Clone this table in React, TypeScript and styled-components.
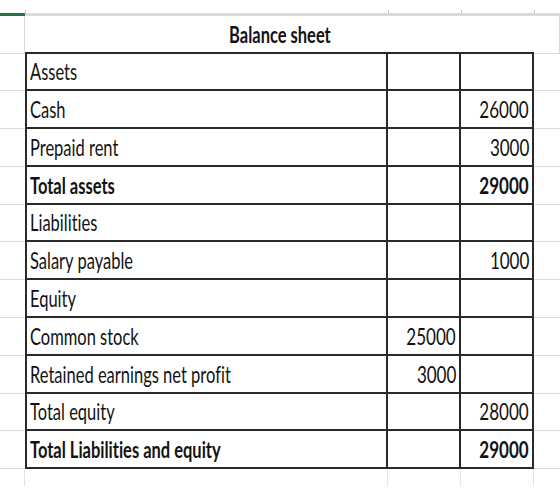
import React from 'react';
import styled, { createGlobalStyle } from 'styled-components';

const GlobalStyle = createGlobalStyle`
  html, body {
    margin: 0;
    padding: 0;
    background: #fff;
  }
  body {
    font-family: Lato, "Open Sans", sans-serif;
    color: #121212;
  }
`;

const COLS = '25px 363px 73px 73px 1fr';
const DARK = '#2a2a2a';
const GRID = '#dadada';

const Page = styled.div`
  width: 560px;
  height: 497px;
  background: #fff;
  overflow: hidden;
`;

const HeaderStrip = styled.div`
  display: grid;
  grid-template-columns: ${COLS};
  height: 16px;
`;

const HeaderCell = styled.div<{ $active?: boolean }>`
  position: relative;
  border-bottom: 3px solid ${(p) => (p.$active ? '#217346' : GRID)};

  &::after {
    content: '';
    position: absolute;
    right: -1px;
    bottom: -3px;
    width: 1px;
    height: 6px;
    background: #c4c4c4;
  }
`;

const Sheet = styled.div`
  display: grid;
  grid-template-columns: ${COLS};
  grid-template-rows: 37.5px repeat(11, 37.8px) 17px;
`;

const Gutter = styled.div<{ $edge?: boolean; $open?: boolean }>`
  border-bottom: ${(p) => (p.$open ? 'none' : `1px solid ${GRID}`)};
  border-right: ${(p) => (p.$edge ? `1px solid ${GRID}` : 'none')};
`;

const TitleCell = styled.div`
  grid-column: span 3;
  display: flex;
  align-items: flex-end;
  justify-content: center;
  padding-bottom: 6px;
  border-bottom: 2px solid ${DARK};
  font-weight: 700;
`;

const Cell = styled.div<{ $first?: boolean; $num?: boolean }>`
  display: flex;
  align-items: flex-end;
  justify-content: ${(p) => (p.$num ? 'flex-end' : 'flex-start')};
  padding: 0 ${(p) => (p.$num ? '3px' : '0')} 6px ${(p) => (p.$num ? '0' : '3px')};
  border-right: 2px solid ${DARK};
  border-bottom: 2px solid ${DARK};
  border-left: ${(p) => (p.$first ? `2px solid ${DARK}` : 'none')};
  min-width: 0;
  white-space: nowrap;
`;

const FootCell = styled.div`
  border-right: 1px solid #e4e4e4;
`;

const Text = styled.span<{ $bold?: boolean; $num?: boolean; $align?: 'left' | 'right' | 'center' }>`
  display: inline-block;
  font-size: 23px;
  line-height: 1;
  font-weight: ${(p) => (p.$bold ? 700 : 400)};
  font-variant-ligatures: none;
  transform: scaleX(${(p) => (p.$num ? 0.74 : 0.717)});
  transform-origin: ${(p) => p.$align || 'left'} bottom;
`;

type Row = {
  label: string;
  c?: string;
  d?: string;
  bold?: boolean;
};

const rows: Row[] = [
  { label: 'Assets' },
  { label: 'Cash', d: '26000' },
  { label: 'Prepaid rent', d: '3000' },
  { label: 'Total assets', d: '29000', bold: true },
  { label: 'Liabilities' },
  { label: 'Salary payable', d: '1000' },
  { label: 'Equity' },
  { label: 'Common stock', c: '25000' },
  { label: 'Retained earnings net profit', c: '3000' },
  { label: 'Total equity', d: '28000' },
  { label: 'Total Liabilities and equity', d: '29000', bold: true },
];

const App: React.FC = () => {
  return (
    <Page>
      <GlobalStyle />
      <HeaderStrip>
        <HeaderCell $active />
        <HeaderCell />
        <HeaderCell />
        <HeaderCell />
        <HeaderCell />
      </HeaderStrip>
      <Sheet>
        <Gutter $edge />
        <TitleCell>
          <Text $bold $align="center">Balance sheet</Text>
        </TitleCell>
        <Gutter $edge />

        {rows.map((row) => (
          <React.Fragment key={row.label}>
            <Gutter />
            <Cell $first>
              <Text $bold={row.bold}>{row.label}</Text>
            </Cell>
            <Cell $num>
              {row.c && (
                <Text $num $bold={row.bold} $align="right">
                  {row.c}
                </Text>
              )}
            </Cell>
            <Cell $num>
              {row.d && (
                <Text $num $bold={row.bold} $align="right">
                  {row.d}
                </Text>
              )}
            </Cell>
            <Gutter />
          </React.Fragment>
        ))}

        <FootCell />
        <FootCell />
        <FootCell />
        <FootCell />
        <Gutter $open />
      </Sheet>
    </Page>
  );
};

export default App;
